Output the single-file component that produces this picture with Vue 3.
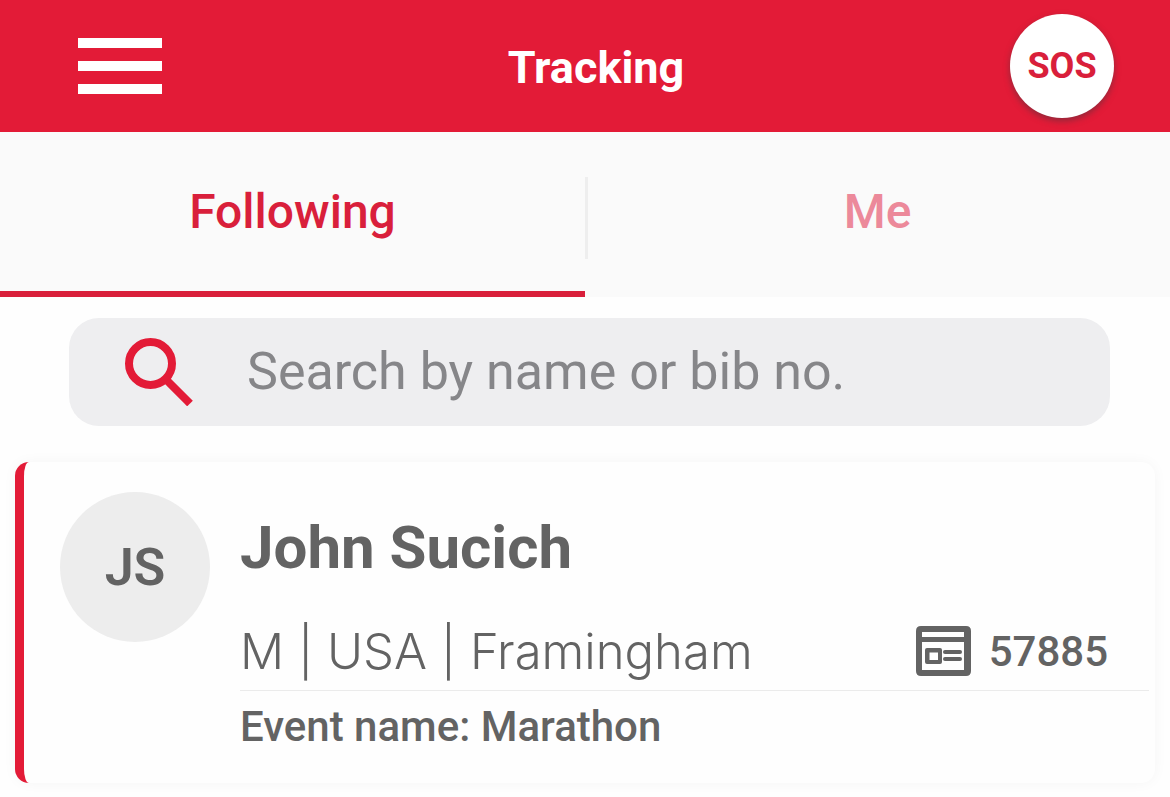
<script setup>
import { ref } from 'vue'

const tabs = ['Following', 'Me']
const activeTab = ref('Following')
const query = ref('')

const runners = [
  {
    initials: 'JS',
    name: 'John Sucich',
    details: 'M | USA | Framingham',
    bib: '57885',
    event: 'Marathon',
  },
]
</script>

<template>
  <div class="screen">
    <header class="topbar">
      <button class="menu" type="button" aria-label="Menu">
        <span class="menu-line"></span>
        <span class="menu-line"></span>
        <span class="menu-line"></span>
      </button>
      <h1 class="title">Tracking</h1>
      <button class="sos" type="button">SOS</button>
    </header>

    <nav class="tabs" role="tablist">
      <button
        v-for="tab in tabs"
        :key="tab"
        class="tab"
        :class="{ active: tab === activeTab }"
        type="button"
        role="tab"
        :aria-selected="tab === activeTab"
        @click="activeTab = tab"
      >
        {{ tab }}
      </button>
    </nav>

    <main class="content">
      <label class="search">
        <svg class="search-icon" viewBox="0 0 68 68" aria-hidden="true">
          <circle cx="25.5" cy="25.5" r="21.5" />
          <path d="M42 42.5 65 65.500" />
        </svg>
        <input
          v-model="query"
          class="search-input"
          type="text"
          aria-label="Search by name or bib no."
          placeholder="Search by name or bib no."
        />
      </label>

      <article v-for="runner in runners" :key="runner.bib" class="card">
        <div class="avatar">{{ runner.initials }}</div>
        <div class="info">
          <h2 class="name">{{ runner.name }}</h2>
          <div class="row">
            <span class="details">{{ runner.details }}</span>
            <span class="bib">
              <svg class="bib-icon" viewBox="0 0 55 50" aria-hidden="true">
                <path
                  fill-rule="evenodd"
                  d="M5 0H50Q55 0 55 5V45Q55 50 50 50H5Q0 50 0 45V5Q0 0 5 0ZM6 6V11H48V6ZM6 16V44H48V16Z"
                />
                <path
                  fill-rule="evenodd"
                  d="M11 22H24Q26 22 26 24V36Q26 38 24 38H11Q9 38 9 36V24Q9 22 11 22ZM13.500 26.500V34H22V26.500Z"
                />
                <rect x="27" y="24" width="19" height="4" rx="2" />
                <rect x="27" y="31" width="19" height="4" rx="2" />
              </svg>
              {{ runner.bib }}
            </span>
          </div>
          <p class="event">Event name: {{ runner.event }}</p>
        </div>
      </article>
    </main>
  </div>
</template>

<style>
body {
  margin: 0;
  background: #fefefe;
}
</style>

<style scoped>
.screen {
  font-family: Roboto, sans-serif;
  color: #636363;
}

button {
  border: 0;
  padding: 0;
  font-family: inherit;
  cursor: pointer;
}

.topbar {
  display: grid;
  grid-template-columns: 1fr auto 1fr;
  align-items: center;
  height: 132px;
  padding: 0 56px 0 78px;
  box-sizing: border-box;
  background: #e31b37;
}

.menu {
  display: flex;
  flex-direction: column;
  gap: 13px;
  width: 84px;
  background: none;
}

.menu-line {
  height: 10px;
  background: #fff;
}

.title {
  margin: 0;
  padding: 4px 0 0;
  font-size: 45px;
  line-height: 52px;
  font-weight: 700;
  color: #fff;
}

.sos {
  justify-self: end;
  width: 104px;
  height: 104px;
  border-radius: 50%;
  background: #fff;
  box-shadow: 0 3px 6px rgba(90, 50, 60, 0.6);
  color: #d91f3b;
  font-size: 36px;
  font-weight: 700;
}

.tabs {
  display: grid;
  grid-template-columns: 1fr 1fr;
  height: 165px;
  background: #fafafa;
}

.tab {
  position: relative;
  border-bottom: 6px solid transparent;
  background: none;
  color: #d91f3b;
  font-size: 48px;
  font-weight: 500;
}

.tab:not(.active) {
  color: #ec899a;
}

.tab.active {
  border-bottom-color: #d91f3b;
}

.tab + .tab::before {
  content: '';
  position: absolute;
  left: 0;
  top: 45px;
  width: 3px;
  height: 82px;
  background: #eee;
}

.content {
  padding: 21px 15px 13px;
}

.search {
  display: flex;
  align-items: center;
  gap: 54px;
  height: 108px;
  margin: 0 45px 36px 54px;
  padding: 0 56px;
  box-sizing: border-box;
  border-radius: 30px;
  background: #eeeef0;
}

.search-icon {
  flex: none;
  width: 68px;
  height: 68px;
  fill: none;
  stroke: #e31b37;
  stroke-width: 8;
}

.search-input {
  flex: 1;
  min-width: 0;
  padding: 0;
  border: 0;
  outline: 0;
  background: none;
  color: #636363;
  font-family: inherit;
  font-size: 52px;
  line-height: 62px;
}

.search-input::placeholder {
  color: #868689;
  opacity: 1;
}

.card {
  display: flex;
  gap: 30px;
  padding: 30px 6px 30px 36px;
  border-left: 9px solid #e31b37;
  border-radius: 14px;
  background: #fefefe;
  box-shadow: 0 0 14px rgba(0, 0, 0, 0.04);
}

.avatar {
  flex: none;
  display: grid;
  place-items: center;
  width: 150px;
  height: 150px;
  border-radius: 50%;
  background: #ededed;
  font-size: 52px;
  font-weight: 600;
}

.info {
  flex: 1;
  min-width: 0;
}

.name {
  margin: 20px 0 28px;
  font-size: 60px;
  line-height: 72px;
  font-weight: 700;
}

.row {
  display: flex;
  align-items: center;
  justify-content: space-between;
  height: 78px;
  padding-right: 41px;
  border-bottom: 1px solid #ebebeb;
}

.details {
  font-family: Inter, sans-serif;
  font-size: 49px;
  font-weight: 300;
}

.bib {
  display: flex;
  align-items: center;
  gap: 18px;
  font-size: 42px;
  font-weight: 500;
}

.bib-icon {
  width: 55px;
  height: 50px;
  fill: #636363;
}

.event {
  margin: 10px 0 0;
  font-size: 42px;
  line-height: 52px;
  font-weight: 500;
}
</style>
